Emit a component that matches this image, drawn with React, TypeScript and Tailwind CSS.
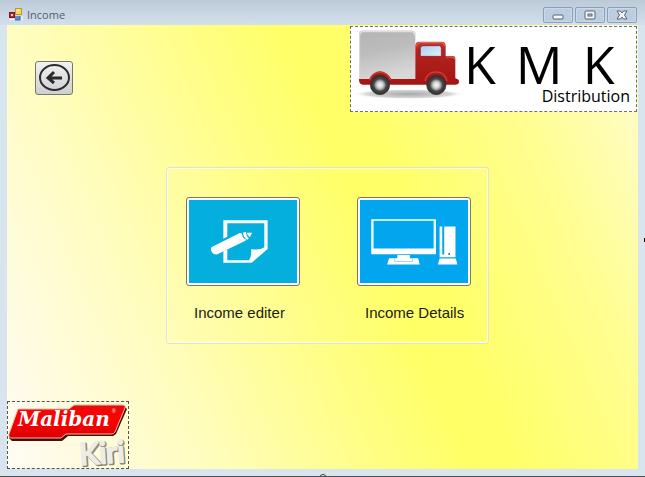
import type { ReactNode } from "react";

function AppIcon() {
  return (
    <svg viewBox="0 0 14 13" className="h-[13px] w-[14px]" aria-hidden="true">
      <rect x="0.5" y="4.5" width="5" height="5" fill="#b8262a" stroke="#7c1a22" />
      <rect x="2" y="6" width="2" height="2" fill="#f3c6b4" />
      <rect x="6.5" y="0.5" width="6" height="6" fill="#fcd54a" stroke="#c7952a" />
      <rect x="7.5" y="1.5" width="3" height="2" fill="#fff0a8" />
      <rect x="6" y="8" width="5" height="4" fill="#5b8ddb" />
      <path d="M6 12h5V8" fill="none" stroke="#3c64b4" />
      <path d="M1 11.500h4M13 8v4" stroke="#ffffff" fill="none" />
    </svg>
  );
}

function CaptionButton({ label, children }: { label: string; children: ReactNode }) {
  return (
    <button
      type="button"
      aria-label={label}
      className="flex h-4 w-[30px] items-center justify-center rounded-[2px] border border-[#8b9fbb] bg-[#bccde0] shadow-[inset_0_0_0_1px_#cbd9e8]"
    >
      <svg viewBox="0 0 12 10" className="h-[10px] w-3" aria-hidden="true">
        {children}
      </svg>
    </button>
  );
}

function Truck() {
  return (
    <svg viewBox="20 20 345 222" className="h-[74px] w-[115px] shrink-0" role="img" aria-label="Delivery truck">
      <defs>
        <linearGradient id="box" x1="0" y1="0" x2="0.25" y2="1">
          <stop offset="0" stopColor="#b4b4b4" />
          <stop offset="0.45" stopColor="#bcbcbc" />
          <stop offset="1" stopColor="#d8d8d8" />
        </linearGradient>
        <linearGradient id="cab" x1="0" y1="0" x2="0" y2="1">
          <stop offset="0" stopColor="#cf3a35" />
          <stop offset="0.2" stopColor="#b3221f" />
          <stop offset="1" stopColor="#a41613" />
        </linearGradient>
        <linearGradient id="glass" x1="0" y1="0" x2="1" y2="1">
          <stop offset="0" stopColor="#a9cdf0" />
          <stop offset="1" stopColor="#e3f2fd" />
        </linearGradient>
        <radialGradient id="shadow">
          <stop offset="0" stopColor="#808080" stopOpacity="0.7" />
          <stop offset="0.75" stopColor="#a0a0a0" stopOpacity="0.45" />
          <stop offset="1" stopColor="#ffffff" stopOpacity="0" />
        </radialGradient>
        <radialGradient id="hub">
          <stop offset="0" stopColor="#ffffff" />
          <stop offset="0.35" stopColor="#c8c8c8" />
          <stop offset="0.55" stopColor="#7c7c7c" />
          <stop offset="0.62" stopColor="#4c4c4c" />
          <stop offset="1" stopColor="#2c2c2c" />
        </radialGradient>
      </defs>
      <ellipse cx="193" cy="221" rx="168" ry="15" fill="url(#shadow)" />
      <rect x="44" y="31" width="169" height="150" rx="8" fill="url(#box)" />
      <path d="M46 44q0-11 11-11h143q11 0 11 11" fill="none" stroke="#dedede" strokeWidth="5" />
      <path d="M46 42v132" stroke="#dcdcdc" strokeWidth="3" />
      <path
        d="M44 176H75Q88 153 107 153T141 176H213V76Q213 64 226 64H292Q304 64 304 76V107H325Q333 107 333 116V174Q344 176 344 184Q344 193 332 193H58Q44 193 44 178Z"
        fill="url(#cab)"
      />
      <path d="M216 78q1-11 11-11h64q10 0 11 11M305 110h18q7 0 8 7" fill="none" stroke="#e0716a" strokeWidth="3" />
      <path d="M76 179q8-23 31-23t31 23M242 182q6-27 33-27t33 27" fill="none" stroke="#c9403a" strokeWidth="4" />
      <path d="M228 108V84q0-8 8-8h49q6 0 6 8v24z" fill="url(#glass)" stroke="#861411" strokeWidth="2" />
      <circle cx="107" cy="194" r="29" fill="url(#hub)" stroke="#333333" strokeWidth="2" />
      <circle cx="276" cy="194" r="29" fill="url(#hub)" stroke="#333333" strokeWidth="2" />
    </svg>
  );
}

function MalibanLogo() {
  return (
    <svg viewBox="0 0 120 66" className="h-[66px] w-[120px] overflow-visible" role="img" aria-label="Maliban Kiri">
      <defs>
        <linearGradient id="banner" x1="0" y1="0" x2="0" y2="1">
          <stop offset="0" stopColor="#e80c0c" />
          <stop offset="0.4" stopColor="#ff0000" />
          <stop offset="1" stopColor="#dc0000" />
        </linearGradient>
      </defs>
      <path d="M11 8H62L67 4H116L119 7L108 32L105 34H60L54 39H4L1 36Z" fill="#4a0d0b" />
      <path d="M10 7H61L66 3H114Q118 3 117 6L107 30Q106 32 103 32H58L53 36H4Q0 36 1 32Z" fill="url(#banner)" stroke="#f4b9a4" strokeWidth="1" />
      <text x="10" y="24" fontFamily="'DejaVu Serif', serif" fontSize="20" fontStyle="italic" fontWeight="700" fill="#ffffff">
        Maliban
      </text>
      <text x="104" y="11" fontFamily="'Liberation Sans', sans-serif" fontSize="5" fill="#ffffff">
        ®
      </text>
      <g fontFamily="Lato, sans-serif" fontSize="30" fontWeight="400" strokeLinejoin="round" transform="rotate(-4 72 62)">
        <text x="73" y="64" fill="#8d8a7c" stroke="#8d8a7c" strokeWidth="3">
          Kiri
        </text>
        <text x="72" y="63" fill="#edede6" stroke="#edede6" strokeWidth="2">
          Kiri
        </text>
      </g>
    </svg>
  );
}

function EditorIcon() {
  return (
    <svg viewBox="86 118 327 249" className="h-[83px] w-[109px]" aria-hidden="true">
      <path d="M190 178H324V265L276 307H190V272L202 267V299H268Q276 288 274 265Q300 270 314 260V187H202V228L190 234Z" fill="#ffffff" />
      <path d="M155 259L240 217Q246 215 247 222Q249 235 260 236L257 240L172 281Q163 284 156 276Q149 264 155 259Z" fill="#ffffff" />
      <path d="M249 216L258 213Q259 226 267 233L263 237Q252 233 249 216Z" fill="#ffffff" />
      <path d="M261 216H277L270 230Q263 225 261 216Z" fill="#ffffff" />
    </svg>
  );
}

function ComputerIcon() {
  return (
    <svg viewBox="86 118 327 249" className="h-[83px] w-[109px]" aria-hidden="true">
      <path fillRule="evenodd" d="M120 175H316V281H120ZM127 180V264H309V180Z" fill="#ffffff" />
      <path d="M311 178V264M123 178V264" stroke="#9bd8fa" strokeWidth="1" />
      <path d="M199 283H237V293H262L267 312H168L174 293H199Z" fill="#ffffff" />
      <path d="M191 294V303H245V294" fill="none" stroke="#63c8f8" strokeWidth="2" />
      <path d="M327 197H335V282H341V197H375V290H327Z" fill="#ffffff" />
      <path d="M327 294H376L381 312H322Z" fill="#ffffff" />
      <circle cx="356" cy="280" r="3" fill="#2c6d96" />
    </svg>
  );
}

function Tile({ label, color, id, children }: { label: string; color: string; id: string; children: ReactNode }) {
  return (
    <div className="flex w-[114px] flex-col">
      <button
        type="button"
        aria-labelledby={id}
        className="h-[89px] rounded-[3px] border border-[#77736a] bg-white p-[2px]"
      >
        <span className={`flex h-full items-center justify-center overflow-hidden ${color}`}>{children}</span>
      </button>
      <span id={id} className="mt-[18px] whitespace-nowrap pl-2 text-[15px] leading-[18px] text-[#1c1c10]">
        {label}
      </span>
    </div>
  );
}

export default function App() {
  return (
    <div className="relative flex min-h-screen flex-col overflow-hidden border-b border-[#4c5157] bg-[#d8e4ee] px-[7px] pb-[7px] font-['Liberation_Sans',Arial,sans-serif]">
      <header className="-mx-[7px] flex h-[25px] items-center justify-between bg-linear-to-b from-[#bccad8] to-[#d3e0ec] pl-[9px] pr-2 pt-1">
        <div className="flex items-center gap-1">
          <AppIcon />
          <h1 className="font-['Open_Sans','Noto_Sans',sans-serif] text-[11px] leading-4 text-[#4f5d72]">Income</h1>
        </div>
        <div className="flex gap-[2px]">
          <CaptionButton label="Minimize">
            <rect x="1" y="5" width="10" height="4" rx="1" fill="#f4f6f8" stroke="#59626f" />
          </CaptionButton>
          <CaptionButton label="Maximize">
            <rect x="1" y="1" width="10" height="8" rx="1" fill="#f4f6f8" stroke="#59626f" />
            <rect x="4" y="4" width="4" height="2" fill="#bccde0" stroke="#59626f" />
          </CaptionButton>
          <CaptionButton label="Close">
            <path d="M1 1H4.500L6 3L7.500 1H11L8.500 5L11 9H7.500L6 7L4.500 9H1L3.500 5Z" fill="#f4f6f8" stroke="#59626f" />
          </CaptionButton>
        </div>
      </header>

      <main className="flex flex-1 flex-col bg-[linear-gradient(67deg,#fffdf6_0%,#fffbe8_6%,#fffcd0_17%,#fffdb8_27%,#fffe88_44%,#ffff66_57%,#ffff68_62%,#fffe90_81%,#fffdbe_94%,#fffdd0_100%)]">
        <div className="flex items-start justify-between">
          <button
            type="button"
            aria-label="Back"
            className="ml-[28px] mt-9 flex h-[34px] w-[38px] items-center justify-center rounded-[3px] border border-[#77776f] bg-linear-to-b from-[#f2f2f2] to-[#cfcfcf]"
          >
            <svg viewBox="0 0 34 30" className="h-[30px] w-[34px]" aria-hidden="true">
              <ellipse cx="17.500" cy="14.500" rx="14.500" ry="12.500" fill="none" stroke="#2b2b2b" strokeWidth="2" />
              <path d="M25 15H11M17 9L11 15L17 20" fill="none" stroke="#2b2b2b" strokeWidth="3" />
            </svg>
          </button>
          <div className="mr-px mt-px flex h-[86px] w-[287px] items-start border border-dashed border-[#6f6f66] bg-white">
            <Truck />
            <div className="flex flex-1 flex-col pr-[6px] pt-[15px] font-['Open_Sans','Noto_Sans',sans-serif] text-black">
              <div className="-ml-[2px] flex gap-5 text-[52px] leading-[44px] font-medium">
                <span>K</span>
                <span>M</span>
                <span>K</span>
              </div>
              <span className="text-right text-[16px] leading-5">Distribution</span>
            </div>
          </div>
        </div>

        <div className="flex justify-center pl-[10px] pt-[55px]">
          <section className="rounded-[3px] border border-[#dfe2d4] p-px shadow-[inset_0_0_0_1px_#ffffd8]">
            <div className="flex gap-[57px] pb-[20px] pl-[18px] pr-4 pt-[28px]">
              <Tile id="income-editer" label="Income editer" color="bg-[#04aedd]">
                <EditorIcon />
              </Tile>
              <Tile id="income-details" label="Income Details" color="bg-[#02a6ee]">
                <ComputerIcon />
              </Tile>
            </div>
          </section>
        </div>

        <footer className="mt-auto">
          <div className="w-[122px] border border-dashed border-[#55554c]">
            <MalibanLogo />
          </div>
        </footer>
      </main>

      <span className="absolute right-0 top-1/2 h-1 w-px bg-black" />
      <span className="absolute bottom-[-5px] left-1/2 size-[7px] -translate-x-1/2 rounded-full border border-[#333333] bg-white" />
    </div>
  );
}
